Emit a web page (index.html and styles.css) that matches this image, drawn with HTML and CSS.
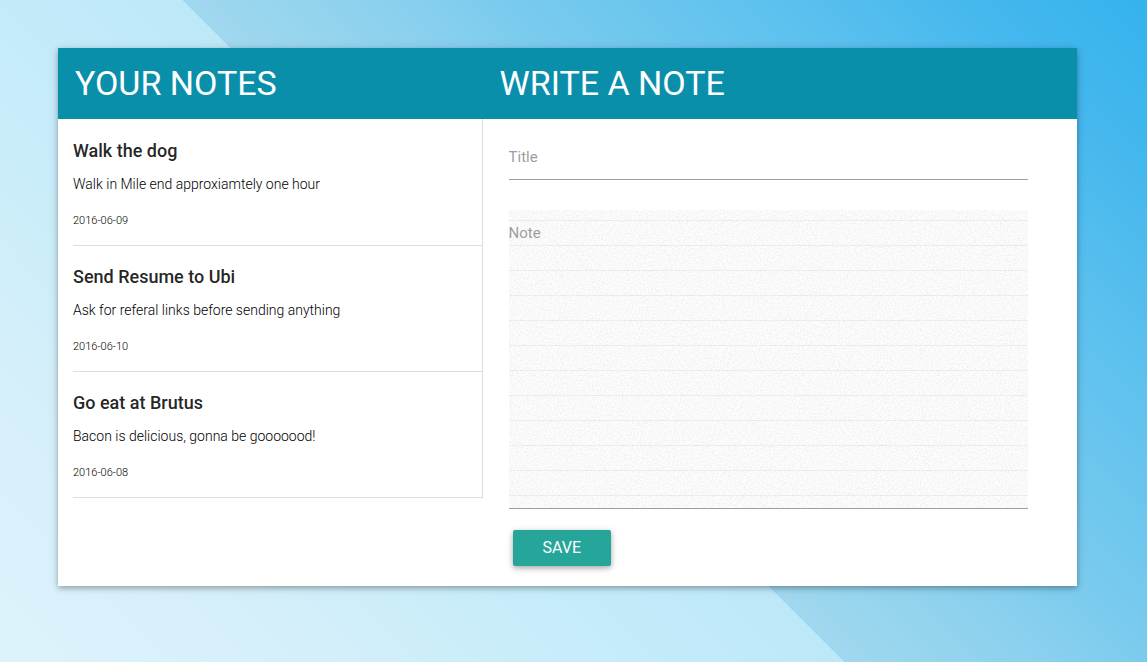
FILE: index.html
```html
<!DOCTYPE html>
<html lang="en">
<head>
<meta charset="utf-8">
<meta name="viewport" content="width=device-width, initial-scale=1">
<title>Your Notes</title>
<link rel="stylesheet" href="styles.css">
</head>
<body>
<main class="card">
  <header class="card-header columns">
    <h1 class="heading">YOUR NOTES</h1>
    <h2 class="heading">WRITE A NOTE</h2>
  </header>
  <div class="columns">
    <section class="notes" aria-label="Your notes">
      <article class="note">
        <h3 class="note-title">Walk the dog</h3>
        <p class="note-text">Walk in Mile end approxiamtely one hour</p>
        <time class="note-date" datetime="2016-06-09">2016-06-09</time>
      </article>
      <article class="note">
        <h3 class="note-title">Send Resume to Ubi</h3>
        <p class="note-text">Ask for referal links before sending anything</p>
        <time class="note-date" datetime="2016-06-10">2016-06-10</time>
      </article>
      <article class="note">
        <h3 class="note-title">Go eat at Brutus</h3>
        <p class="note-text">Bacon is delicious, gonna be gooooood!</p>
        <time class="note-date" datetime="2016-06-08">2016-06-08</time>
      </article>
    </section>
    <form class="form">
      <input class="field field-title" type="text" placeholder="Title" aria-label="Title">
      <textarea class="field field-note" placeholder="Note" aria-label="Note"></textarea>
      <button class="save" type="button">SAVE</button>
    </form>
  </div>
</main>
</body>
</html>
```
FILE: styles.css
```css
* {
  box-sizing: border-box;
}

body {
  margin: 0;
  min-height: 100vh;
  padding: 48px 70px 48px 58px;
  font-family: Roboto, "Liberation Sans", sans-serif;
  color: rgba(0, 0, 0, 0.87);
  background: linear-gradient(45deg, #ddf3fc 0%, #d5effa 17%, #cdeef9 24%, #c8ecfb 32%, #bde8f8 46.7%, #a0d8ee 46.7%, #8ad0ee 58%, #7acbee 64%, #5bc0ee 80%, #43b7ee 91%, #35b3ec 100%) no-repeat;
}

.card {
  background: #fff;
  box-shadow: 0 2px 5px 0 rgba(0, 0, 0, 0.26), 0 2px 10px 0 rgba(0, 0, 0, 0.12);
}

.columns {
  display: grid;
  grid-template-columns: 5fr 7fr;
  align-items: start;
}

.card-header {
  background: #0a8fab;
  color: #fff;
}

.heading {
  margin: 0;
  padding: 15px 17px 16px;
  font-size: 34px;
  line-height: 40px;
  font-weight: 400;
}

.notes {
  padding: 1px 0 0 15px;
  border-right: 1px solid #ddd;
}

.note {
  padding: 19px 0 15px;
  border-bottom: 1px solid #ddd;
}

.note-title {
  margin: 0 0 11px;
  font-size: 18px;
  line-height: 24px;
  font-weight: 500;
}

.note-text {
  margin: 0 0 18px;
  font-size: 14px;
  line-height: 20px;
  font-weight: 300;
  color: #000;
}

.note-date {
  display: block;
  font-size: 11px;
  line-height: 18px;
  font-weight: 300;
  color: #000;
}

.form {
  display: flex;
  flex-direction: column;
  align-items: flex-start;
  padding: 16px 49px 20px 26px;
}

.field {
  display: block;
  width: 100%;
  margin: 0;
  border: 0;
  border-bottom: 1px solid #9e9e9e;
  border-radius: 0;
  outline: none;
  color: inherit;
  font-family: inherit;
  font-size: 15px;
  line-height: 20px;
}

.field::placeholder {
  color: #9e9e9e;
  opacity: 1;
}

.field-title {
  height: 45px;
  margin-bottom: 30px;
  padding: 0;
  background: transparent;
}

.field-note {
  height: 299px;
  padding: 13px 0;
  resize: none;
  background:
    repeating-linear-gradient(transparent 0 10px, rgba(0, 0, 0, 0.05) 10px 11px, transparent 11px 25px),
    url("data:image/svg+xml,%3Csvg xmlns='http://www.w3.org/2000/svg' width='520' height='300'%3E%3Cfilter id='n' x='0' y='0' width='100%25' height='100%25'%3E%3CfeTurbulence type='fractalNoise' baseFrequency='.6' numOctaves='3' stitchTiles='stitch'/%3E%3CfeColorMatrix values='0 0 0 0 0 0 0 0 0 0 0 0 0 0 0 .12 0 0 0 -.045'/%3E%3C/filter%3E%3Crect width='520' height='300' filter='url(%23n)'/%3E%3C/svg%3E"),
    #fdfdfd;
}

.save {
  height: 36px;
  margin: 21px 0 0 4px;
  padding: 0 30px;
  border: 0;
  border-radius: 2px;
  background: #26a69a;
  color: #fff;
  font-family: inherit;
  font-size: 16px;
  line-height: 36px;
  font-weight: 400;
  box-shadow: 0 2px 5px 0 rgba(0, 0, 0, 0.26), 0 2px 10px 0 rgba(0, 0, 0, 0.12);
}
```
